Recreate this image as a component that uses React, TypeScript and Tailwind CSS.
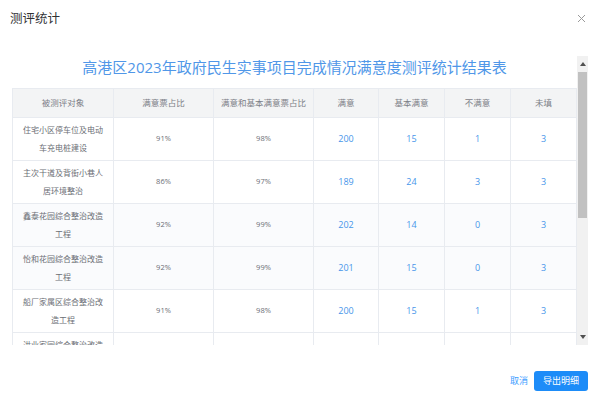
import { useState } from "react";

const rows = [
  { name: "住宅小区停车位及电动车充电桩建设", rate: "91%", rate2: "98%", good: 200, basic: 15, bad: 1, none: 3 },
  { name: "主次干道及背街小巷人居环境整治", rate: "86%", rate2: "97%", good: 189, basic: 24, bad: 3, none: 3 },
  { name: "鑫泰花园综合整治改造工程", rate: "92%", rate2: "99%", good: 202, basic: 14, bad: 0, none: 3, tint: true },
  { name: "怡和花园综合整治改造工程", rate: "92%", rate2: "99%", good: 201, basic: 15, bad: 0, none: 3, tint: true },
  { name: "船厂家属区综合整治改造工程", rate: "91%", rate2: "98%", good: 200, basic: 15, bad: 1, none: 3 },
  { name: "洪业家园综合整治改造工程", rate: "90%", rate2: "98%", good: 198, basic: 16, bad: 2, none: 3 },
];

const heads = ["被测评对象", "满意票占比", "满意和基本满意票占比", "满意", "基本满意", "不满意", "未填"];

// cell shows 10 characters per line
function splitName(name: string) {
  const lines: string[] = [];
  for (let i = 0; i < name.length; i += 10) lines.push(name.slice(i, i + 10));
  return lines;
}

function ScrollBar() {
  return (
    <div className="w-[11px] flex flex-col bg-[#f1f1f1]">
      <div className="h-[16px] flex items-center justify-center">
        <svg width="6" height="4" viewBox="0 0 6 4"><path d="M0 4 L3 0 L6 4 Z" fill="#505050" /></svg>
      </div>
      <div className="h-[146px] mx-[1px] bg-[#c1c1c1]" />
      <div className="flex-1" />
      <div className="h-[16px] flex items-center justify-center">
        <svg width="6" height="4" viewBox="0 0 6 4"><path d="M0 0 L3 4 L6 0 Z" fill="#505050" /></svg>
      </div>
    </div>
  );
}

export default function App() {
  const [open] = useState(true);
  if (!open) return null;

  return (
    <div className="w-[600px] h-[406px] bg-white flex flex-col font-['Open_Sans','Noto_Sans_CJK_SC',sans-serif] overflow-hidden">
      <div className="h-[38px] flex items-center justify-between pl-[10px] pr-[14px]">
        <span className="text-[12.5px] text-[#303133]">测评统计</span>
        <svg width="9" height="9" viewBox="0 0 9 9" className="mb-[2px]">
          <path d="M1 1 L8 8 M8 1 L1 8" stroke="#9a9a9a" strokeWidth="1" />
        </svg>
      </div>

      <div className="mt-[18px] ml-[12px] mr-[12px] h-[289px] flex">
        <div className="flex-1 overflow-hidden">
          <div className="h-[32px] pt-[2px] leading-[18px] text-center text-[15px] text-[#5097e8]">
            高港区2023年政府民生实事项目完成情况满意度测评统计结果表
          </div>
          <table className="w-full table-fixed border-collapse">
            <colgroup>
              <col className="w-[101px]" />
              <col className="w-[100px]" />
              <col className="w-[100px]" />
              <col className="w-[65px]" />
              <col className="w-[66px]" />
              <col className="w-[66px]" />
              <col className="w-[66px]" />
            </colgroup>
            <thead>
              <tr className="h-[29px] bg-[#f3f4f5]">
                {heads.map((h) => (
                  <th key={h} className="border border-[#e8ebf0] font-normal text-[8.5px] text-[#7d8087] px-[2px] whitespace-nowrap">
                    {h}
                  </th>
                ))}
              </tr>
            </thead>
            <tbody>
              {rows.map((r) => (
                <tr key={r.name} className={r.tint ? "h-[43px] bg-[#fafbfd]" : "h-[43px] bg-white"}>
                  <td className="border border-[#e8ebf0] px-[6px] text-[8px] leading-[18px] text-[#6b6e75]">
                    <div className="flex flex-col items-center">
                      {splitName(r.name).map((line) => (
                        <span key={line} className="whitespace-nowrap">{line}</span>
                      ))}
                    </div>
                  </td>
                  <td className="border border-[#e8ebf0] text-center text-[7.5px] text-[#6b6e75]">{r.rate}</td>
                  <td className="border border-[#e8ebf0] text-center text-[7.5px] text-[#6b6e75]">{r.rate2}</td>
                  <td className="border border-[#e8ebf0] text-center text-[9px] text-[#4796ea]">{r.good}</td>
                  <td className="border border-[#e8ebf0] text-center text-[9px] text-[#4796ea]">{r.basic}</td>
                  <td className="border border-[#e8ebf0] text-center text-[9px] text-[#4796ea]">{r.bad}</td>
                  <td className="border border-[#e8ebf0] text-center text-[9px] text-[#4796ea]">{r.none}</td>
                </tr>
              ))}
            </tbody>
          </table>
        </div>
        <ScrollBar />
      </div>

      <div className="mt-[26px] flex items-center justify-end gap-[6px] pr-[12px]">
        <span className="text-[9px] text-[#409eff]">取消</span>
        <button className="w-[54px] h-[20px] rounded-[3px] bg-[#1d8cf8] text-white text-[9px]">导出明细</button>
      </div>
    </div>
  );
}
